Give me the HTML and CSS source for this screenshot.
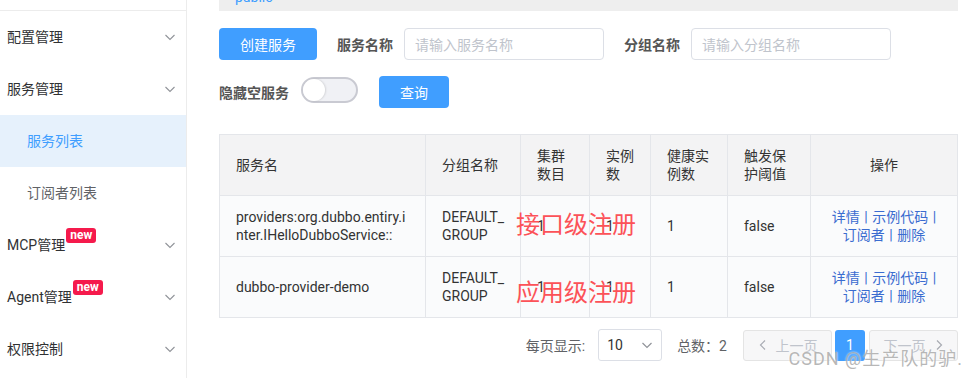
FILE: index.html
```html
<!DOCTYPE html>
<html lang="zh-CN">
<head>
    <meta charset="UTF-8">
    <meta name="viewport" content="width=device-width, initial-scale=1.0">
    <title>服务列表</title>
    <link rel="stylesheet" href="styles.css">
</head>
<body>
    <div class="layout">
        <!-- Menu latéral -->
        <aside class="sidebar">
            <div class="sidebar-top"></div>
            <div class="menu-item">
                <span>配置管理</span>
                <svg class="chev" width="12" height="12" viewBox="0 0 12 12"><path d="M1.5 4 L6 8.5 L10.5 4"/></svg>
            </div>
            <div class="menu-item">
                <span>服务管理</span>
                <svg class="chev" width="12" height="12" viewBox="0 0 12 12"><path d="M1.5 4 L6 8.5 L10.5 4"/></svg>
            </div>
            <div class="menu-item sub active"><span>服务列表</span></div>
            <div class="menu-item sub"><span>订阅者列表</span></div>
            <div class="menu-item">
                <span>MCP管理<span class="badge">new</span></span>
                <svg class="chev" width="12" height="12" viewBox="0 0 12 12"><path d="M1.5 4 L6 8.5 L10.5 4"/></svg>
            </div>
            <div class="menu-item">
                <span>Agent管理<span class="badge">new</span></span>
                <svg class="chev" width="12" height="12" viewBox="0 0 12 12"><path d="M1.5 4 L6 8.5 L10.5 4"/></svg>
            </div>
            <div class="menu-item">
                <span>权限控制</span>
                <svg class="chev" width="12" height="12" viewBox="0 0 12 12"><path d="M1.5 4 L6 8.5 L10.5 4"/></svg>
            </div>
        </aside>

        <!-- Contenu principal -->
        <main class="main">
            <div class="ns-bar"><span>public</span></div>

            <div class="toolbar">
                <button class="btn btn-create">创建服务</button>
                <span class="label">服务名称</span>
                <div class="input">请输入服务名称</div>
                <span class="label">分组名称</span>
                <div class="input">请输入分组名称</div>
            </div>

            <div class="toolbar toolbar-2">
                <span class="label label-switch">隐藏空服务</span>
                <div class="switch"><div class="knob"></div></div>
                <button class="btn btn-query">查询</button>
            </div>

            <div class="table-wrap">
                <table>
                    <colgroup>
                        <col style="width:206px">
                        <col style="width:95px">
                        <col style="width:69px">
                        <col style="width:61px">
                        <col style="width:77px">
                        <col style="width:83px">
                        <col style="width:147px">
                    </colgroup>
                    <tr>
                        <th>服务名</th>
                        <th>分组名称</th>
                        <th>集群<br>数目</th>
                        <th>实例<br>数</th>
                        <th>健康实<br>例数</th>
                        <th>触发保<br>护阈值</th>
                        <th class="center">操作</th>
                    </tr>
                    <tr>
                        <td>providers:org.dubbo.entiry.i<br>nter.IHelloDubboService::</td>
                        <td>DEFAULT_<br>GROUP</td>
                        <td>1</td>
                        <td>1</td>
                        <td>1</td>
                        <td>false</td>
                        <td class="center ops">
                            <a href="#">详情</a> | <a href="#">示例代码</a> |<br>
                            <a href="#">订阅者</a> | <a href="#">删除</a>
                        </td>
                    </tr>
                    <tr>
                        <td>dubbo-provider-demo</td>
                        <td>DEFAULT_<br>GROUP</td>
                        <td>1</td>
                        <td>1</td>
                        <td>1</td>
                        <td>false</td>
                        <td class="center ops">
                            <a href="#">详情</a> | <a href="#">示例代码</a> |<br>
                            <a href="#">订阅者</a> | <a href="#">删除</a>
                        </td>
                    </tr>
                </table>
                <!-- annotations -->
                <div class="note note-1">接口级注册</div>
                <div class="note note-2">应用级注册</div>
            </div>

            <div class="pager">
                <span>每页显示:</span>
                <div class="select">
                    <span>10</span>
                    <svg width="12" height="12" viewBox="0 0 12 12"><path d="M1.5 4 L6 8.5 L10.5 4"/></svg>
                </div>
                <span class="total">总数：2</span>
                <div class="page-btn">
                    <svg width="10" height="12" viewBox="0 0 10 12"><path d="M7 1.5 L2.5 6 L7 10.5"/></svg>
                    <span>上一页</span>
                </div>
                <div class="page-num">1</div>
                <div class="page-btn">
                    <span>下一页</span>
                    <svg width="10" height="12" viewBox="0 0 10 12"><path d="M3 1.5 L7.5 6 L3 10.5"/></svg>
                </div>
            </div>
        </main>
    </div>

    <div class="watermark">CSDN @生产队的驴.</div>
</body>
</html>
```

FILE: styles.css
```css
:root {
    --bleu: #409eff;
    --bordure: #e4e6ea;
    --texte: #303133;
}

body {
    font-family: Roboto, "Noto Sans CJK SC", sans-serif;
    font-size: 14px;
    margin: 0;
    color: var(--texte);
    background: #fff;
    overflow: hidden;
    position: relative;
    height: 378px;
}

.layout {
    display: flex;
    height: 378px;
}

/* Menu latéral */
.sidebar {
    width: 186px;
    flex-shrink: 0;
    border-right: 1px solid #ececec;
}

.sidebar-top {
    height: 10px;
    border-bottom: 1px solid #ececec;
}

.menu-item {
    height: 52px;
    display: flex;
    align-items: center;
    justify-content: space-between;
    padding: 0 10px 0 7px;
    color: var(--texte);
    line-height: 20px;
}

.menu-item.sub {
    padding-left: 27px;
    color: #606266;
}

.menu-item.active {
    background: #e6f1fc;
    color: var(--bleu);
}

.chev path {
    fill: none;
    stroke: #909399;
    stroke-width: 1.1;
}

.badge {
    display: inline-block;
    position: relative;
    top: -7px;
    margin-left: 1px;
    background: #f51a4c;
    color: #fff;
    font-size: 12px;
    font-weight: bold;
    line-height: 15px;
    padding: 0 4px;
    border-radius: 3px;
    vertical-align: top;
}

/* Contenu principal */
.main {
    flex: 1;
    padding: 0 11px 0 32px;
}

.ns-bar {
    height: 11px;
    background: #eeeeee;
    overflow: hidden;
    padding-left: 16px;
}

.ns-bar span {
    display: block;
    margin-top: -11px;
    line-height: 16px;
    color: var(--bleu);
}

.toolbar {
    display: flex;
    align-items: center;
    margin-top: 17px;
}

.toolbar-2 {
    margin-top: 16px;
}

.btn {
    height: 32px;
    background: var(--bleu);
    color: #fff;
    border: none;
    border-radius: 4px;
    font-family: inherit;
    font-size: 14px;
    padding: 0;
}

.btn-create {
    width: 98px;
    margin-right: 20px;
}

.btn-query {
    width: 70px;
}

.label {
    font-weight: bold;
    color: #555;
    margin-right: 11px;
}

.label-switch {
    margin-right: 12px;
}

.input {
    width: 200px;
    height: 32px;
    box-sizing: border-box;
    border: 1px solid #dcdfe6;
    border-radius: 4px;
    padding: 0 10px;
    color: #c0c4cc;
    display: flex;
    align-items: center;
    margin-right: 20px;
}

.switch {
    width: 57px;
    height: 26px;
    box-sizing: border-box;
    border: 2px solid #c9cad2;
    border-radius: 13px;
    background: #f0f1f5;
    margin-right: 21px;
    margin-bottom: 5px;
    display: flex;
    align-items: center;
}

.knob {
    width: 22px;
    height: 22px;
    border-radius: 50%;
    background: #fff;
    box-shadow: 1px 0 2px rgba(0,0,0,0.12);
}

/* Tableau */
.table-wrap {
    position: relative;
    margin-top: 26px;
}

table {
    width: 100%;
    border-collapse: collapse;
    table-layout: fixed;
}

th, td {
    height: 60px;
    border: 1px solid var(--bordure);
    padding: 0 6px 0 16px;
    text-align: left;
    font-weight: normal;
    line-height: 18px;
    color: #333;
}

th {
    background: #f3f3f4;
}

td {
    background: #fafbfc;
}

.center {
    text-align: center;
    padding-left: 6px;
}

td.ops {
    color: #3a6cd0;
    word-spacing: 1px;
}

td a {
    color: #3a6cd0;
    text-decoration: none;
}

.note {
    position: absolute;
    color: #fc5258;
    font-size: 24px;
    line-height: 28px;
}

.note-1 {
    left: 297px;
    top: 77px;
}

.note-2 {
    left: 297px;
    top: 145px;
}

/* Pagination */
.pager {
    display: flex;
    justify-content: flex-end;
    align-items: center;
    margin-top: 11px;
    color: #606266;
}

.select {
    width: 64px;
    height: 32px;
    box-sizing: border-box;
    border: 1px solid #dcdfe6;
    border-radius: 3px;
    margin-left: 13px;
    margin-right: 15px;
    display: flex;
    align-items: center;
    justify-content: space-between;
    padding: 0 8px 0 8px;
    color: #303133;
}

.select path,
.page-btn path {
    fill: none;
    stroke: #a8abb2;
    stroke-width: 1.2;
}

.select path {
    stroke: #909399;
}

.total {
    margin-right: 16px;
}

.page-btn {
    width: 89px;
    height: 31px;
    box-sizing: border-box;
    border: 1px solid #e4e4e4;
    border-radius: 3px;
    background: #f7f7f8;
    color: #c0c4cc;
    display: flex;
    align-items: center;
    justify-content: center;
    gap: 8px;
}

.page-num {
    width: 30px;
    height: 31px;
    margin: 0 4px 0 3px;
    border-radius: 3px;
    background: var(--bleu);
    color: #fff;
    display: flex;
    align-items: center;
    justify-content: center;
}

.watermark {
    position: absolute;
    right: 5px;
    top: 349px;
    font-size: 18px;
    line-height: 20px;
    letter-spacing: 1px;
    color: rgba(160, 160, 160, 0.75);
    text-shadow: 0 0 2px #fff;
}
```
